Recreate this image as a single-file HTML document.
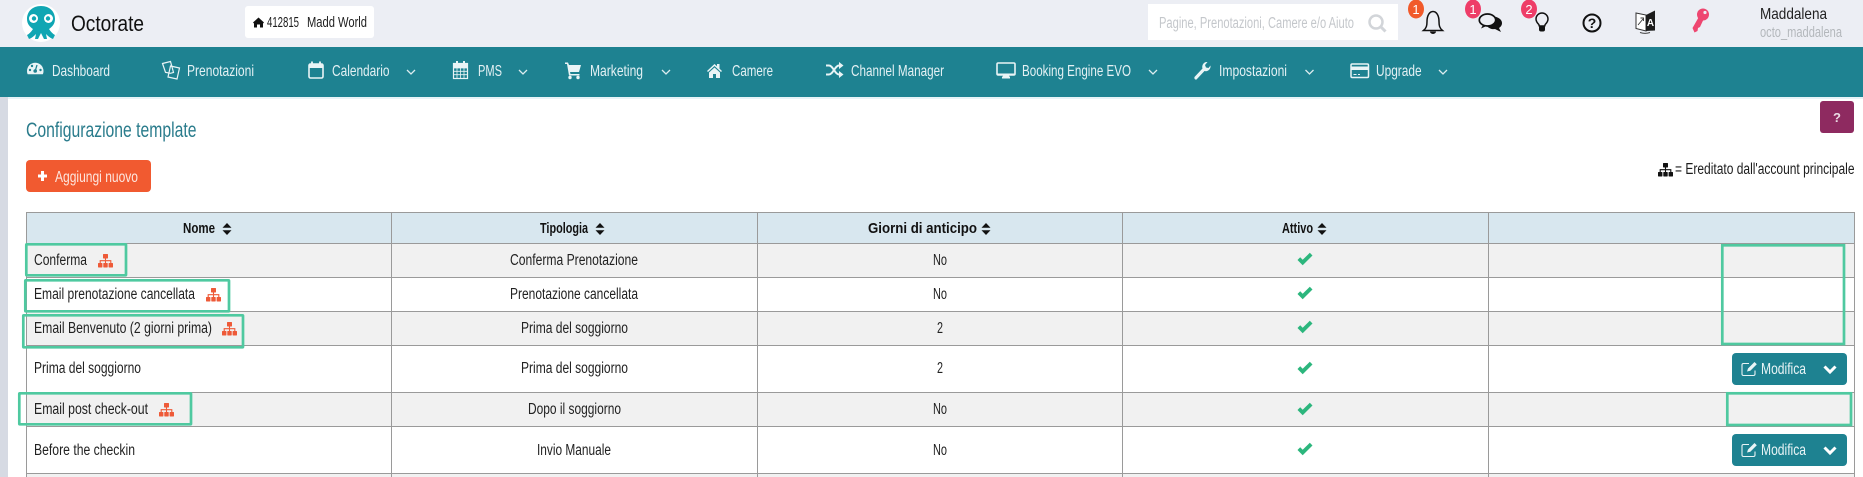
<!DOCTYPE html>
<html lang="it"><head><meta charset="utf-8"><title>Octorate</title>
<style>
html,body{margin:0;padding:0;background:#fff;width:1863px;height:477px;overflow:hidden}
svg{display:block}
text{font-family:"Liberation Sans Narrow","Liberation Sans",sans-serif;font-size:14px;fill:#1d1d1d}
.n{fill:#e4f1f4;font-size:16px}
.c{font-size:15.5px;fill:#222}
.h{font-size:15px;font-weight:bold;fill:#111}
.m{fill:#e9f4f6;font-size:16px}
.b{fill:#fff;font-size:13px;font-family:"Liberation Sans",sans-serif}
</style></head><body>
<svg width="1863" height="477" viewBox="0 0 1863 477" xmlns="http://www.w3.org/2000/svg">
<defs>
<g id="tree"><rect x="5" y="0" width="5" height="4.5" rx=".6"/><rect x="0" y="9" width="4.4" height="4.5" rx=".6"/><rect x="5.3" y="9" width="4.4" height="4.5" rx=".6"/><rect x="10.6" y="9" width="4.4" height="4.5" rx=".6"/><path d="M7.5 4v3M2.2 9.5V6.7h10.6v2.8M7.5 6.7v3" fill="none" stroke="currentColor" stroke-width="1.1"/></g>
<path id="chev" d="M-4-2 0 2 4-2" fill="none" stroke="#dcecef" stroke-width="1.3"/>
<g id="sort"><path d="M-4.500-1.200 0-6 4.500-1.200zM-4.500 1.200 0 6 4.500 1.200z" fill="#111"/></g>
<path id="chk" d="M-7.500 0-4.800-2.700-2.300-.2 4.800-7.200 7.500-4.500-2.300 5.200z" fill="#2cb67d"/>
<g id="mod"><rect x="0" y="0" width="115" height="32" rx="4" fill="#1e8291"/>
<path d="M17 10.500H11.500a1.500 1.500 0 0 0-1.500 1.500v9a1.500 1.500 0 0 0 1.500 1.500h10a1.500 1.500 0 0 0 1.500-1.500v-3.500" fill="none" stroke="#e9f4f6" stroke-width="1.100"/><path d="M15 18.500l1-3 6.500-6.500 2.300 2.300-6.500 6.500z" fill="#e9f4f6"/>
<path d="M92.500 13.500 98 19 103.500 13.500" fill="none" stroke="#fff" stroke-width="3"/></g>
</defs>

<rect width="1863" height="47" fill="#eceef4"/>
<rect y="47" width="1863" height="50" fill="#1e8291"/>
<rect y="97" width="1863" height="2" fill="#e6f3f7"/>
<rect y="97" width="8" height="380" fill="#d6dae3"/>

<!-- logo -->
<circle cx="41" cy="23" r="19" fill="#fff"/>
<path d="M41 6c-9 0-14 6-14 13 0 5 3 8 6 10-2 3-4 5-6 6l2 4c3-1 5-3 7-5l-1 5h3l3-6 3 6h3l-1-5c2 2 4 4 7 5l2-4c-2-1-4-3-6-6 3-2 6-5 6-10 0-7-5-13-14-13z" fill="#10a6b3"/>
<circle cx="33.500" cy="18.500" r="4.500" fill="#fff"/><circle cx="48.500" cy="18.500" r="4.500" fill="#fff"/>
<circle cx="34" cy="18.500" r="2.200" fill="#10a6b3"/><circle cx="48" cy="18.500" r="2.200" fill="#10a6b3"/>
<text x="71" y="31" textLength="73" lengthAdjust="spacingAndGlyphs" style="font-size:22px;fill:#111">Octorate</text>

<!-- chip -->
<rect x="245" y="6" width="129" height="32" rx="3" fill="#fff"/>
<path d="M253 22.500 258.500 17.500 264 22.500 263 23.500V27.500H260V24.500H257V27.500H254V23.500z" fill="#111"/>
<text x="267" y="27" textLength="32" lengthAdjust="spacingAndGlyphs" style="font-size:15px">412815</text>
<text x="307" y="27" textLength="60" lengthAdjust="spacingAndGlyphs" style="font-size:15px">Madd World</text>

<!-- search -->
<rect x="1148" y="4" width="250" height="36" fill="#fff"/>
<text x="1159" y="28" textLength="195" lengthAdjust="spacingAndGlyphs" style="fill:#c4c7cb;font-size:15.5px">Pagine, Prenotazioni, Camere e/o Aiuto</text>
<circle cx="1376" cy="22" r="6.500" fill="none" stroke="#d2d5d9" stroke-width="2.500"/><path d="M1381 27l4.500 4.500" stroke="#d2d5d9" stroke-width="3"/>

<!-- top icons -->
<path d="M1423.500 30.500c3-2.500 3.500-5 3.500-9 0-6 2.500-10 6-10s6 4 6 10c0 4 .5 6.500 3.500 9z" fill="none" stroke="#111" stroke-width="1.500"/><path d="M1430 31.500a3 2.500 0 0 0 6 0z" fill="#111"/>
<ellipse cx="1416" cy="9" rx="8" ry="9.500" fill="#f15a2b"/><text class="b" x="1416" y="14" text-anchor="middle">1</text>

<path d="M1494 16.500c4 .5 8 3 8 6.500 0 2.500-1.500 4-3 5l2 4-6-3c-3 .5-6-.5-7.500-2.500 5 0 8-4 6.500-10z" fill="#111"/>
<ellipse cx="1487.500" cy="20" rx="8.200" ry="6" fill="#eceef4" stroke="#111" stroke-width="1.700"/><path d="M1483 25l-2 3.500 5.500-2.500z" fill="#111"/>
<ellipse cx="1473" cy="9" rx="8" ry="9.500" fill="#ee3d68"/><text class="b" x="1473" y="14" text-anchor="middle">1</text>

<path d="M1538.800 24.500c-2-2-2.800-3.500-2.800-5.500a6 6 0 0 1 12 0c0 2-.8 3.500-2.800 5.500l-.5 1.500h-5.400z" fill="none" stroke="#111" stroke-width="1.500"/><rect x="1539" y="25.500" width="6" height="6" rx="2" fill="#111"/>
<ellipse cx="1529" cy="9" rx="8" ry="9.500" fill="#ee3d68"/><text class="b" x="1529" y="14" text-anchor="middle">2</text>

<circle cx="1592" cy="23" r="8.500" fill="none" stroke="#111" stroke-width="2"/><text x="1592" y="28" text-anchor="middle" style="font-size:14px;font-weight:bold;font-family:'Liberation Sans',sans-serif;fill:#111">?</text>

<path d="M1636 13l10 2v16l-10-2.500z" fill="#fff" stroke="#333" stroke-width="1"/><path d="M1646 15l9-4.500v20l-9 .5z" fill="#1c1c1c"/><path d="M1638 25l5-6M1640.500 18h3v3" stroke="#333" fill="none" stroke-width=".9"/><text x="1650.500" y="26" text-anchor="middle" style="font-size:10px;font-weight:bold;font-family:'Liberation Sans',sans-serif;fill:#fff">A</text><path d="M1640 32.500c3 1 7 1 10 0" stroke="#444" fill="none"/>

<path d="M1698.500 17.500l-6 10.500 2 4.500 3-1.500.5-3 2-1 3.500-7.500z" fill="#ee4670"/><circle cx="1703" cy="14.500" r="6" fill="#ee4670"/><circle cx="1705" cy="12.500" r="1.600" fill="#eceef4"/>

<text x="1760" y="19" textLength="67" lengthAdjust="spacingAndGlyphs" style="font-size:16px;fill:#222">Maddalena</text>
<text x="1760" y="37" textLength="82" lengthAdjust="spacingAndGlyphs" style="fill:#b3b7bb;font-size:15px">octo_maddalena</text>

<!-- nav -->
<g fill="#e9f4f6">
<path d="M27 71a8.200 8.200 0 1 1 16.500 0c0 1.200-.2 2.300-.7 3.300H27.700c-.5-1-.7-2.100-.7-3.300z"/>
<circle cx="35.200" cy="71" r="1.800" fill="#1e8291"/><path d="M35.500 70l1.500-5" stroke="#1e8291" stroke-width="1.300"/><circle cx="30" cy="70" r="1.200" fill="#1e8291"/><circle cx="40.500" cy="70" r="1.200" fill="#1e8291"/><circle cx="32" cy="66" r="1.200" fill="#1e8291"/>
</g>
<text class="n" x="52" y="76" textLength="58" lengthAdjust="spacingAndGlyphs">Dashboard</text>

<g fill="none" stroke="#e9f4f6" stroke-width="1.200"><path d="M162.500 63.500l8-2 3 11-3 .8-5-1z"/><path d="M170.500 66l9 2-2.500 11-9-2z"/></g>
<text class="n" x="187" y="76" textLength="67" lengthAdjust="spacingAndGlyphs">Prenotazioni</text>

<g><rect x="309" y="64" width="14" height="14" rx="1.500" fill="none" stroke="#e9f4f6" stroke-width="1.600"/><rect x="309" y="63.500" width="14" height="4.500" fill="#e9f4f6"/><path d="M312 61.500v3M320 61.500v3" stroke="#e9f4f6" stroke-width="1.800"/></g>
<text class="n" x="332" y="76" textLength="57.500" lengthAdjust="spacingAndGlyphs">Calendario</text>
<use href="#chev" x="411" y="72"/>

<g fill="none" stroke="#e9f4f6"><rect x="453.500" y="63.500" width="14" height="15" stroke-width="1.200"/><path d="M453.500 68h14M453.500 71.300h14M453.500 74.700h14M457 68v10.500M460.500 68v10.500M464 68v10.500" stroke-width=".8"/><path d="M457 61v4M464 61v4" stroke-width="2"/></g><rect x="453.500" y="63.500" width="14" height="4.500" fill="#e9f4f6"/>
<text class="n" x="478" y="76" textLength="24" lengthAdjust="spacingAndGlyphs">PMS</text>
<use href="#chev" x="523" y="72"/>

<path d="M565 62.500h3l1 2.500h12l-2 7h-9l.5 2h9v1.500h-10.500L567 64h-2z" fill="#e9f4f6"/><circle cx="570" cy="77.500" r="1.700" fill="#e9f4f6"/><circle cx="578" cy="77.500" r="1.700" fill="#e9f4f6"/>
<text class="n" x="590" y="76" textLength="53" lengthAdjust="spacingAndGlyphs">Marketing</text>
<use href="#chev" x="666" y="72"/>

<path d="M707 71l7.500-7 2.500 2.300V64h2.500v4.600l2.500 2.400-1 1-6.500-6-6.500 6zM709 72.500l5.500-5 5.500 5V78h-4v-4h-3v4h-4z" fill="#e9f4f6"/>
<text class="n" x="732" y="76" textLength="41" lengthAdjust="spacingAndGlyphs">Camere</text>

<g fill="none" stroke="#e9f4f6" stroke-width="2"><path d="M826 65.500h3c4 0 6 9 10 9h1"/><path d="M826 74.500h3c4 0 6-9 10-9h1"/></g><path d="M839 62l4.500 3.500-4.500 3.500zM839 71l4.500 3.500-4.500 3.500z" fill="#e9f4f6"/>
<text class="n" x="851" y="76" textLength="93" lengthAdjust="spacingAndGlyphs">Channel Manager</text>

<rect x="997" y="63" width="18" height="12" rx="1.200" fill="none" stroke="#e9f4f6" stroke-width="1.600"/><path d="M997 73.500h18v2h-18zM1002 76.500h8v2h-8z" fill="#e9f4f6"/><rect x="1003" y="75" width="6" height="2" fill="#e9f4f6"/>
<text class="n" x="1022" y="76" textLength="109" lengthAdjust="spacingAndGlyphs">Booking Engine EVO</text>
<use href="#chev" x="1153" y="72"/>

<path d="M1194.500 77l8-8.500c-1-3 1-7 5-6.500l-2.500 3 1 2.500 2.500.5 2-2.500c.5 4-3 6.500-6 5.500l-8 8.500c-1.500.5-2.500-1-2-2.500z" fill="#e9f4f6"/>
<text class="n" x="1219" y="76" textLength="68" lengthAdjust="spacingAndGlyphs">Impostazioni</text>
<use href="#chev" x="1309.500" y="72"/>

<rect x="1351" y="64" width="17.500" height="13.500" rx="1.200" fill="none" stroke="#e9f4f6" stroke-width="1.500"/><rect x="1351" y="66.500" width="17.500" height="3.500" fill="#e9f4f6"/><path d="M1353.500 74.500h3M1358 74.500h2" stroke="#e9f4f6"/>
<text class="n" x="1376" y="76" textLength="45.600" lengthAdjust="spacingAndGlyphs">Upgrade</text>
<use href="#chev" x="1443" y="72"/>

<!-- heading -->
<text x="26" y="137" textLength="170.500" lengthAdjust="spacingAndGlyphs" style="font-size:21px;fill:#2a7c8c">Configurazione template</text>
<rect x="1820" y="101" width="34" height="32" rx="3" fill="#8e2a60"/>
<text x="1837" y="122" text-anchor="middle" style="font-size:13px;font-weight:bold;font-family:'Liberation Sans',sans-serif;fill:#eadbe4">?</text>

<rect x="26" y="160" width="125" height="32" rx="4" fill="#f15a30"/>
<path d="M38 174.500h3v-3.500h3v3.500h3v3h-3v3.500h-3v-3.500h-3z" fill="#fff"/>
<text x="55" y="182" textLength="83" lengthAdjust="spacingAndGlyphs" style="fill:#fde6de;font-size:15.5px">Aggiungi nuovo</text>

<use href="#tree" x="1658" y="163" style="color:#111" fill="#111"/>
<text x="1675" y="174" textLength="179.500" lengthAdjust="spacingAndGlyphs" style="font-size:15.5px">= Ereditato dall'account principale</text>

<!-- table -->
<rect x="26" y="213" width="1828" height="30" fill="#d8e7ef"/>
<rect x="26" y="243" width="1828" height="34" fill="#f1f1f1"/>
<rect x="26" y="311" width="1828" height="34" fill="#f1f1f1"/>
<rect x="26" y="392" width="1828" height="34" fill="#f1f1f1"/>
<rect x="26" y="473" width="1828" height="4" fill="#f1f1f1"/>
<path d="M26 212.500H1854.500M26 243.500H1854.500M26 277.500H1854.500M26 311.500H1854.500M26 345.500H1854.500M26 392.500H1854.500M26 426.500H1854.500M26 473.500H1854.500M26.500 212V477M391.500 212V477M757.500 212V477M1122.500 212V477M1488.500 212V477M1854.500 212V477" fill="none" stroke="#9a9a9a" stroke-width="1"/>

<text class="h" x="183" y="233" textLength="32" lengthAdjust="spacingAndGlyphs">Nome</text><use href="#sort" x="227" y="229"/>
<text class="h" x="540" y="233" textLength="48" lengthAdjust="spacingAndGlyphs">Tipologia</text><use href="#sort" x="600" y="229"/>
<text class="h" x="868" y="233" textLength="109" lengthAdjust="spacingAndGlyphs">Giorni di anticipo</text><use href="#sort" x="986" y="229"/>
<text class="h" x="1282" y="233" textLength="31" lengthAdjust="spacingAndGlyphs">Attivo</text><use href="#sort" x="1322" y="229"/>

<text class="c" x="34" y="265" textLength="53" lengthAdjust="spacingAndGlyphs">Conferma</text>
<text class="c" x="34" y="299" textLength="161" lengthAdjust="spacingAndGlyphs">Email prenotazione cancellata</text>
<text class="c" x="34" y="333" textLength="178" lengthAdjust="spacingAndGlyphs">Email Benvenuto (2 giorni prima)</text>
<text class="c" x="34" y="373" textLength="107" lengthAdjust="spacingAndGlyphs">Prima del soggiorno</text>
<text class="c" x="34" y="414" textLength="114" lengthAdjust="spacingAndGlyphs">Email post check-out</text>
<text class="c" x="34" y="455" textLength="101" lengthAdjust="spacingAndGlyphs">Before the checkin</text>

<g fill="#ee5a38" style="color:#ee5a38">
<use href="#tree" x="98" y="254"/><use href="#tree" x="206" y="288"/><use href="#tree" x="222" y="322"/><use href="#tree" x="159" y="403"/>
</g>

<text class="c" x="510" y="265" textLength="128" lengthAdjust="spacingAndGlyphs">Conferma Prenotazione</text>
<text class="c" x="510" y="299" textLength="128" lengthAdjust="spacingAndGlyphs">Prenotazione cancellata</text>
<text class="c" x="521" y="333" textLength="107" lengthAdjust="spacingAndGlyphs">Prima del soggiorno</text>
<text class="c" x="521" y="373" textLength="107" lengthAdjust="spacingAndGlyphs">Prima del soggiorno</text>
<text class="c" x="528" y="414" textLength="93" lengthAdjust="spacingAndGlyphs">Dopo il soggiorno</text>
<text class="c" x="537" y="455" textLength="74" lengthAdjust="spacingAndGlyphs">Invio Manuale</text>

<text class="c" x="933" y="265" textLength="14" lengthAdjust="spacingAndGlyphs">No</text>
<text class="c" x="933" y="299" textLength="14" lengthAdjust="spacingAndGlyphs">No</text>
<text class="c" x="937" y="333" textLength="6" lengthAdjust="spacingAndGlyphs">2</text>
<text class="c" x="937" y="373" textLength="6" lengthAdjust="spacingAndGlyphs">2</text>
<text class="c" x="933" y="414" textLength="14" lengthAdjust="spacingAndGlyphs">No</text>
<text class="c" x="933" y="455" textLength="14" lengthAdjust="spacingAndGlyphs">No</text>

<use href="#chk" x="1305" y="260"/><use href="#chk" x="1305" y="294"/><use href="#chk" x="1305" y="328"/><use href="#chk" x="1305" y="369"/><use href="#chk" x="1305" y="410"/><use href="#chk" x="1305" y="450"/>

<use href="#mod" x="1732" y="353"/><text class="m" x="1761" y="374" textLength="45" lengthAdjust="spacingAndGlyphs">Modifica</text>
<use href="#mod" x="1732" y="434"/><text class="m" x="1761" y="455" textLength="45" lengthAdjust="spacingAndGlyphs">Modifica</text>

<!-- green annotations -->
<g fill="none" stroke="#4fc9a0" stroke-width="2.700">
<rect x="26.300" y="244.300" width="99.700" height="31" rx=".5"/>
<rect x="25.300" y="280.300" width="203.700" height="31" rx=".5"/>
<rect x="23.300" y="315.300" width="219.700" height="32" rx=".5"/>
<rect x="19.300" y="393.300" width="171.700" height="31" rx=".5"/>
<rect x="1722.300" y="245.300" width="121.700" height="98.700"/>
<rect x="1727.300" y="393.300" width="123.700" height="31.700"/>
</g>
</svg>
</body></html>
